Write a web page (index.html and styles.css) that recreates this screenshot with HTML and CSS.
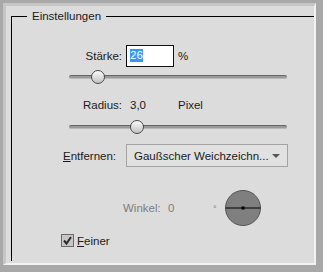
FILE: index.html
```html
<!DOCTYPE html>
<html lang="de">
<head>
    <meta charset="UTF-8">
    <title>Einstellungen</title>
    <link rel="stylesheet" href="styles.css">
</head>
<body>
<div class="frame">
    <div class="panel">
        <fieldset class="group">
            <legend>Einstellungen</legend>

            <div class="row row-strength">
                <span class="label-right">Stärke:</span>
                <div class="field"><span class="selected">26</span></div>
                <span class="unit">%</span>
            </div>
            <div class="slider slider-strength">
                <div class="track"></div>
                <div class="thumb" style="left: 22px"></div>
            </div>

            <div class="row row-radius">
                <span class="label-right">Radius:</span>
                <span class="value">3,0</span>
                <span>Pixel</span>
            </div>
            <div class="slider slider-radius">
                <div class="track"></div>
                <div class="thumb" style="left: 61px"></div>
            </div>

            <div class="row row-remove">
                <span class="label-remove"><u>E</u>ntfernen:</span>
                <div class="select">
                    <span>Gaußscher Weichzeichn...</span>
                    <span class="arrow"></span>
                </div>
            </div>

            <div class="row row-angle">
                <span class="label-angle">Winkel:</span>
                <span class="angle-value">0</span>
                <span class="degree">°</span>
                <svg class="dial" width="36" height="36" viewBox="0 0 36 36">
                    <circle cx="18" cy="18" r="17.5" fill="#7f7f7f" stroke="#555"/>
                    <line x1="0.5" y1="18" x2="35.5" y2="18" stroke="#000" stroke-width="1"/>
                    <rect x="16.5" y="16.5" width="3" height="3" fill="#000"/>
                </svg>
            </div>

            <div class="row row-check">
                <svg class="check" width="13" height="13" viewBox="0 0 13 13">
                    <rect x="0.5" y="0.5" width="12" height="12" fill="#c6c6c6" stroke="#6a6a6a"/>
                    <polyline points="3,6.5 5.5,9.5 10,3" fill="none" stroke="#2b2b2b" stroke-width="2"/>
                </svg>
                <span class="check-label"><u>F</u>einer</span>
            </div>
        </fieldset>
    </div>
</div>
</body>
</html>
```

FILE: styles.css
```css
body {
    margin: 0;
    font-family: "Liberation Sans", Arial, sans-serif;
    font-size: 11.5px;
    color: #1b1b1b;
}

.frame {
    width: 323px;
    height: 272px;
    box-sizing: border-box;
    background: #a8a8a8;
    padding: 3px 7px 7px 3px;
}

.panel {
    height: 100%;
    box-sizing: border-box;
    background: #dcdcdc;
    border-top: 3px solid #c6c6c6;
    border-left: 3px solid #c6c6c6;
    border-right: 2px solid #f2f2f2;
    border-bottom: 2px solid #f2f2f2;
    padding: 3px 0 2px 5px;
    display: flex;
    flex-direction: column;
    overflow: hidden;
}

.group {
    flex: 1;
    margin: 0;
    padding: 0;
    min-width: 0;
    border: none;
    border-top: 1px solid #000;
    border-left: 1px solid #000;
}

.group legend {
    margin-left: 15px;
    padding: 0 5px;
    line-height: 14px;
}

.row {
    display: flex;
    align-items: center;
}

.label-right {
    width: 110px;
    text-align: right;
}

/* Stärke */
.row-strength {
    margin-top: 22px;
    height: 22px;
}

.field {
    margin-left: 4px;
    width: 48px;
    height: 22px;
    box-sizing: border-box;
    border: 1px solid #111;
    background: #fff;
    padding: 3px 0 0 3px;
}

.selected {
    display: inline-block;
    background: #3399ff;
    color: #fff;
    line-height: 13px;
    padding: 0 0 0 0;
}

.unit {
    margin-left: 4px;
}

/* sliders */
.slider {
    position: relative;
    width: 218px;
    height: 14px;
    margin-left: 57px;
    padding-top: 5px;
    box-sizing: border-box;
}

.track {
    height: 4px;
    box-sizing: border-box;
    border-radius: 2px;
    background: #9a9a9a;
    border-top: 1px solid #666;
    border-bottom: 1px solid #b8b8b8;
}

.thumb {
    position: absolute;
    top: 0;
    width: 14px;
    height: 14px;
    box-sizing: border-box;
    border-radius: 50%;
    border: 1px solid #4a4a4a;
    background: linear-gradient(#fbfbfb, #c2c2c2);
}

.slider-strength {
    margin-top: 3px;
}

/* Radius */
.row-radius {
    margin-top: 14px;
    height: 14px;
}

.value {
    margin-left: 8px;
    width: 48px;
}

.slider-radius {
    margin-top: 8px;
}

/* Entfernen */
.row-remove {
    margin-top: 10px;
    height: 23px;
}

.label-remove {
    margin-left: 51px;
    width: 63px;
}

.select {
    width: 162px;
    height: 23px;
    box-sizing: border-box;
    border: 1px solid #a3a3a3;
    background: #e1e1e1;
    display: flex;
    align-items: center;
    padding-left: 7px;
    white-space: nowrap;
}

.arrow {
    margin-left: auto;
    margin-right: 7px;
    width: 0;
    height: 0;
    border-left: 4px solid transparent;
    border-right: 4px solid transparent;
    border-top: 4px solid #555;
}

/* Winkel */
.row-angle {
    margin-top: 23px;
    height: 36px;
    color: #7d7d7d;
}

.label-angle {
    margin-left: 111px;
    width: 45px;
}

.angle-value {
    width: 45px;
}

.degree {
    width: 12px;
    font-size: 9px;
    padding-top: 2px;
}

/* Feiner */
.row-check {
    margin-top: 8px;
    height: 13px;
}

.check {
    margin-left: 49px;
}

.check-label {
    margin-left: 3px;
}
```
